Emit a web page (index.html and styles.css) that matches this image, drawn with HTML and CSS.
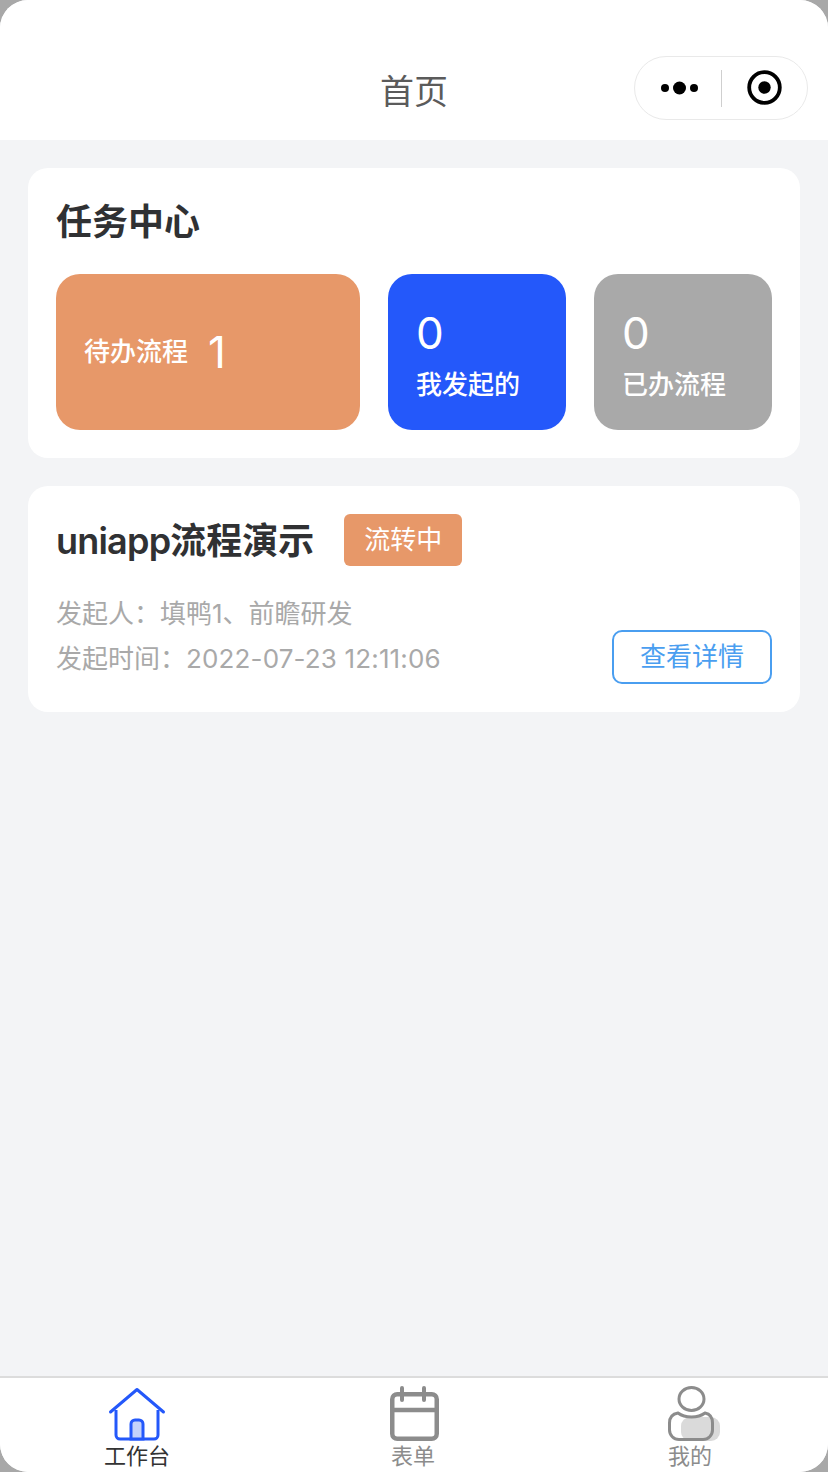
FILE: index.html
```html
<!DOCTYPE html>
<html lang="zh-CN">
<head>
<meta charset="utf-8">
<title>首页</title>
<link rel="stylesheet" href="styles.css">
</head>
<body>
<div class="app">
  <header class="nav">
    <h1 class="nav-title">首页</h1>
    <div class="capsule">
      <svg class="cap-dots" width="38" height="14" viewBox="0 0 38 14"><circle cx="4" cy="7" r="4"/><circle cx="18.5" cy="7" r="6.5"/><circle cx="33" cy="7" r="4"/></svg>
      <span class="cap-sep"></span>
      <svg class="cap-target" width="36" height="36" viewBox="0 0 36 36"><circle cx="17.5" cy="17.5" r="15.3" fill="none" stroke="#000" stroke-width="3.8"/><circle cx="17.5" cy="17.5" r="6.2"/></svg>
    </div>
  </header>
  <main class="content">
    <section class="card tasks">
      <h2 class="card-title">任务中心</h2>
      <div class="task-row">
        <div class="tile tile-todo"><span class="tile-label">待办流程</span><span class="tile-num">1</span></div>
        <div class="tile tile-col tile-mine"><span class="tile-num">0</span><span class="tile-label">我发起的</span></div>
        <div class="tile tile-col tile-done"><span class="tile-num">0</span><span class="tile-label">已办流程</span></div>
      </div>
    </section>
    <section class="card flow">
      <div class="flow-head">
        <h2 class="flow-title"><span class="flow-latin">uniapp</span>流程演示</h2>
        <span class="badge">流转中</span>
      </div>
      <div class="flow-body">
        <div class="flow-meta">
          <p>发起人：填鸭1、前瞻研发</p>
          <p>发起时间：<span class="flow-time">2022-07-23 12:11:06</span></p>
        </div>
        <button class="detail-btn">查看详情</button>
      </div>
    </section>
  </main>
  <nav class="tabbar">
    <div class="tab tab-active">
      <svg width="60" height="56" viewBox="0 0 60 56"><path d="M9 24V49a4 4 0 0 0 4 4H47a4 4 0 0 0 4-4V24" fill="none" stroke="#2458fa" stroke-width="3"/><path d="M3.5 26L30 3.5L56.5 26" fill="none" stroke="#2458fa" stroke-width="3" stroke-linecap="round" stroke-linejoin="round"/><path d="M24 53V38a4 4 0 0 1 4-4h4a4 4 0 0 1 4 4V53z" fill="#c4d2fb" stroke="#2458fa" stroke-width="3"/></svg>
      <span>工作台</span>
    </div>
    <div class="tab">
      <svg width="60" height="56" viewBox="0 0 60 56"><rect x="9.25" y="8.25" width="44.5" height="44.5" rx="5" fill="none" stroke="#8c8c8c" stroke-width="4.5"/><path d="M8 24H55" stroke="#8c8c8c" stroke-width="4.5"/><path d="M19 2V14M41 2V14" stroke="#8c8c8c" stroke-width="4" stroke-linecap="round"/></svg>
      <span>表单</span>
    </div>
    <div class="tab">
      <svg width="60" height="56" viewBox="0 0 60 56"><rect x="21" y="31" width="39" height="24" rx="9" fill="#dadada"/><ellipse cx="31.5" cy="13" rx="12.5" ry="11.5" fill="none" stroke="#8c8c8c" stroke-width="3"/><path d="M18 27C12 28 9.5 32 9.5 37V44A9.5 9.5 0 0 0 19 53.5H43A9.5 9.5 0 0 0 52.5 44V37C52.5 32 50 28 45 27C41 30 36 31 31.5 31C26 31 22 30 18 27Z" fill="none" stroke="#8c8c8c" stroke-width="3"/></svg>
      <span>我的</span>
    </div>
  </nav>
</div>
</body>
</html>
```

FILE: styles.css
```css
* { box-sizing: border-box; margin: 0; padding: 0; }
html, body { width: 828px; height: 1472px; overflow: hidden; background: #a8a8a8; }
body { font-family: "Inter", "Noto Sans CJK SC", sans-serif; }
.app {
  width: 828px; height: 1472px; display: flex; flex-direction: column;
  background: #f3f4f6; border-radius: 28px; overflow: hidden;
}
.nav {
  height: 140px; background: #fff; flex: none; position: relative;
  display: flex; justify-content: center; align-items: flex-end; padding-bottom: 24px;
}
.nav-title { font-size: 34px; line-height: 48px; font-weight: 400; color: #5b5b5b; }
.capsule {
  position: absolute; left: 634px; top: 56px; width: 174px; height: 64px;
  border: 1px solid #e9e9e9; border-radius: 32px; background: #fff;
  display: flex; align-items: center; padding-left: 26px;
}
.cap-dots { flex: none; fill: #000; }
.cap-sep { width: 1px; height: 37px; background: #cfcfcf; margin-left: 22px; margin-right: 25px; flex: none; }
.cap-target { flex: none; fill: #000; }
.content { flex: 1; padding: 28px 28px 0; display: flex; flex-direction: column; gap: 28px; }
.card { background: #fff; border-radius: 20px; }
.tasks { height: 290px; padding: 28px; }
.card-title { font-size: 36px; line-height: 52px; font-weight: 700; color: #303133; }
.task-row { display: flex; gap: 28px; margin-top: 26px; }
.tile { height: 156px; border-radius: 24px; color: #fff; display: flex; }
.tile-todo { width: 304px; background: #e79869; align-items: center; padding-left: 28px; gap: 20px; }
.tile-col { width: 178px; flex-direction: column; padding: 31px 0 0 28px; }
.tile-mine { background: #2458fa; }
.tile-done { background: #a9a9a9; }
.tile-label { font-size: 26px; line-height: 36px; font-weight: 500; white-space: nowrap; }
.tile-num { font-size: 44px; line-height: 56px; font-weight: 400; }
.tile-col .tile-label { margin-top: 6px; }
.flow { height: 226px; padding: 28px 28px 0; }
.flow-head { display: flex; align-items: flex-start; }
.flow-title { font-size: 36px; line-height: 54px; font-weight: 600; color: #303133; }
.flow-latin { letter-spacing: -0.8px; }
.badge {
  margin-left: 30px; width: 118px; height: 52px; border-radius: 6px; background: #e79869;
  color: #fff; font-size: 26px; line-height: 52px; text-align: center;
}
.flow-body { display: flex; justify-content: space-between; align-items: flex-end; margin-top: 23px; }
.flow-meta p { font-size: 26px; line-height: 45px; color: #a9a9a9; }
.flow-time { letter-spacing: 0.15px; }
.detail-btn {
  width: 160px; height: 54px; margin-bottom: -3px; border: 2px solid #4a9ef0; border-radius: 10px; background: #fff;
  color: #4a9ef0; font-family: inherit; font-size: 26px; line-height: 50px;
}
.tabbar {
  height: 96px; flex: none; background: #fff; border-top: 2px solid #dcdcdc;
  display: grid; grid-template-columns: 274px 278px 276px;
}
.tab { display: flex; flex-direction: column; align-items: center; color: #8c8c8c; font-size: 22px; line-height: 28px; padding-top: 8px; }
.tab svg { display: block; flex: none; }
.tab-active { color: #333; }
```
